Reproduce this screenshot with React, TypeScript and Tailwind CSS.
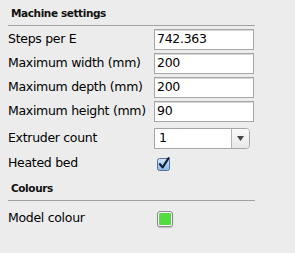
import React from 'react';

const fields = [
  { label: 'Steps per E', value: '742.363' },
  { label: 'Maximum width (mm)', value: '200' },
  { label: 'Maximum depth (mm)', value: '200' },
  { label: 'Maximum height (mm)', value: '90' },
];

const Section = ({ title, className }: { title: string; className?: string }) => (
  <div className={`flex items-end border-b border-[#a3a3a3] ${className ?? ''}`}>
    <span className="pl-[3px] pb-[5px] text-[10.5px] font-bold leading-[14px] tracking-[-0.4px] text-[#111]">{title}</span>
  </div>
);

const Checkbox = () => (
  <svg width="14" height="14" viewBox="0 0 14 14">
    <defs>
      <linearGradient id="cb" x1="0" y1="0" x2="0" y2="1">
        <stop offset="0" stopColor="#d6e8fb" />
        <stop offset="1" stopColor="#86b6ea" />
      </linearGradient>
    </defs>
    <rect x="0.5" y="1.5" width="12" height="12" rx="2" fill="url(#cb)" stroke="#56739a" />
    <path d="M3 7.2 L5.6 10.4 L11.6 1.2" fill="none" stroke="#12233f" strokeWidth="2.2" strokeLinecap="round" strokeLinejoin="round" />
  </svg>
);

export default function App() {
  return (
    <div className="h-[253px] w-[295px] bg-[#ececec] font-['DejaVu_Sans',sans-serif] text-[12.5px] tracking-[-0.3px] text-black">
      <div className="w-[255px] pl-[8px]">
        <Section title="Machine settings" className="h-[26px]" />

        <div className="mt-[3px] flex flex-col gap-[3px]">
          {fields.map((f) => (
            <div key={f.label} className="flex h-[21px] items-center">
              <span className="w-[146px] whitespace-nowrap">{f.label}</span>
              <div className="flex h-[21px] w-[100px] items-center border border-[#a6a6a6] bg-white pl-[2px] shadow-[inset_0_1px_0_#d8d8d8]">
                {f.value}
              </div>
            </div>
          ))}
        </div>

        <div className="mt-[6px] flex h-[21px] items-center">
          <span className="w-[146px]">Extruder count</span>
          <div className="flex h-[21px] w-[96px] items-stretch rounded-r-[4px] border border-[#a6a6a6] bg-white">
            <span className="flex flex-1 items-center pl-[4px]">1</span>
            <span className="flex w-[18px] items-center justify-center rounded-r-[3px] border-l border-[#b5b5b5] bg-gradient-to-b from-[#fafafa] to-[#e8e8e8]">
              <svg width="7" height="5" viewBox="0 0 7 5">
                <path d="M0 0 H7 L3.5 5 Z" fill="#444" />
              </svg>
            </span>
          </div>
        </div>

        <div className="mt-[4px] flex h-[21px] items-center">
          <span className="w-[149px]">Heated bed</span>
          <Checkbox />
        </div>

        <Section title="Colours" className="h-[27px]" />

        <div className="mt-[7px] flex h-[21px] items-center">
          <span className="w-[149px]">Model colour</span>
          <div className="flex h-[16px] w-[16px] items-center justify-center rounded-[3px] border border-[#8a8a8a] bg-white shadow-[0_1px_1px_rgba(0,0,0,0.2)]">
            <div className="h-[12px] w-[12px] rounded-[1px] bg-[#53dc41]" />
          </div>
        </div>
      </div>
    </div>
  );
}
